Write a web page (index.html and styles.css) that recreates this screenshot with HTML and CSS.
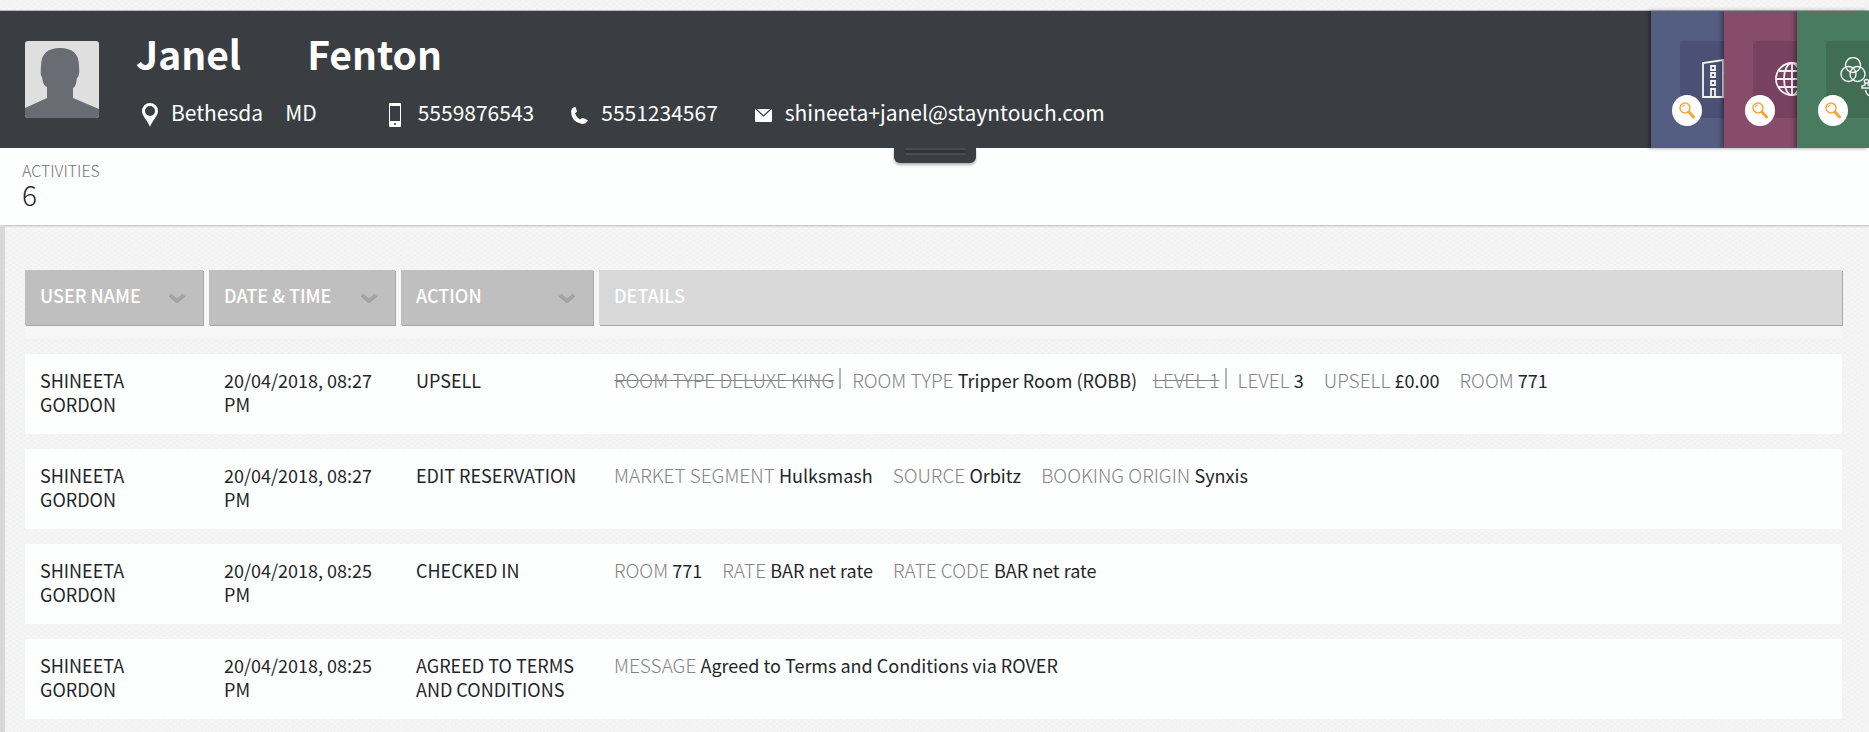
FILE: index.html
```
<!DOCTYPE html>
<html lang="en">
<head>
    <meta charset="utf-8">
    <title>Activity Log</title>
    <link rel="stylesheet" href="styles.css">
</head>
<body>
    <header class="guest">
        <svg class="avatar" viewBox="0 0 74 77" aria-hidden="true">
            <rect width="74" height="77" fill="#dfdfdf"/>
            <path d="M0 77V67L22 57V46Q18 45 17 36Q15 35 16 25Q16 7 35 7Q54 7 54 25Q55 35 52 37Q51 46 48 47V57L74 68V77Z" fill="#696c73"/>
        </svg>
        <div class="guest-info">
            <h1><span>Janel</span><span>Fenton</span></h1>
            <ul class="contact">
                <li class="place">
                    <svg width="16" height="24" viewBox="0 0 16 24"><path fill-rule="evenodd" d="M8 0A8 8 0 0 0 0 8C0 13 6 18 8 24C10 18 16 13 16 8A8 8 0 0 0 8 0ZM8 3A5 5 0 1 1 8 13A5 5 0 0 1 8 3Z" fill="#fff"/></svg>
                    <span>Bethesda</span><span class="state">MD</span>
                </li>
                <li class="mobile">
                    <svg width="12" height="24" viewBox="0 0 12 24"><path fill-rule="evenodd" d="M1 0H11Q12 0 12 1V23Q12 24 11 24H1Q0 24 0 23V1Q0 0 1 0ZM1 3V18H11V3ZM6 20A1 1 0 0 0 6 22A1 1 0 0 0 6 20Z" fill="#fff"/></svg>
                    <span>5559876543</span>
                </li>
                <li class="phone">
                    <svg width="17" height="17" viewBox="0 0 17 17"><path d="M3 0L4.500 0L6 4.500L4 6.500Q5.500 10.500 9 12.500L11 11Q14 11 17 13.500Q15 17 11 17Q0 15 0 4Q1 1 3 0Z" fill="#fff"/></svg>
                    <span>5551234567</span>
                </li>
                <li class="mail">
                    <svg width="17" height="13" viewBox="0 0 17 13"><rect width="17" height="13" rx="1" fill="#fff"/><path d="M1 0L8.500 7L16 0" fill="none" stroke="#3b3d42" stroke-width="1.200"/></svg>
                    <span>shineeta+janel@stayntouch.com</span>
                </li>
            </ul>
        </div>
        <nav class="cards">
            <button class="card company" aria-label="Company">
                <span class="tile">
                    <svg width="40" height="40" viewBox="0 0 40 40"><path d="M1 38V4L21 1V38ZM21 14H38V38H21M9 7H13V11H9ZM9 14H13V18H9ZM9 22H13V26H9ZM9 38V30H13V38"/></svg>
                </span>
                <span class="lens"><svg width="16" height="17" viewBox="0 0 16 17"><circle cx="6" cy="6" r="5"/><path d="M10 10L14.500 15" class="grip"/><path d="M3 5Q4 3 6 3" class="glint"/></svg></span>
            </button>
            <button class="card travel" aria-label="Travel agent">
                <span class="tile">
                    <svg width="40" height="40" viewBox="0 0 40 40"><circle cx="17" cy="20" r="16"/><ellipse cx="17" cy="20" rx="8" ry="16"/><path d="M17 4V36M1 20H33M4 12H30M4 28H30"/></svg>
                </span>
                <span class="lens"><svg width="16" height="17" viewBox="0 0 16 17"><circle cx="6" cy="6" r="5"/><path d="M10 10L14.500 15" class="grip"/><path d="M3 5Q4 3 6 3" class="glint"/></svg></span>
            </button>
            <button class="card group" aria-label="Group">
                <span class="tile">
                    <svg class="rings" width="42" height="42" viewBox="0 0 42 42"><circle cx="13" cy="8" r="7.500"/><circle cx="8.500" cy="17" r="7.500"/><circle cx="17.500" cy="17" r="7.500"/><path d="M22 31V29L25 28V26H28V28L31 29V31ZM25 26Q23 23 26.500 22.500Q30 23 28 26M25.500 33Q26 38 32 40"/></svg>
                </span>
                <span class="lens"><svg width="16" height="17" viewBox="0 0 16 17"><circle cx="6" cy="6" r="5"/><path d="M10 10L14.500 15" class="grip"/><path d="M3 5Q4 3 6 3" class="glint"/></svg></span>
            </button>
        </nav>
        <button class="handle" aria-label="Expand guest details"></button>
    </header>

    <section class="summary">
        <span class="summary-label">ACTIVITIES</span>
        <span class="summary-count">6</span>
    </section>

    <main class="log">
        <table>
            <colgroup>
                <col class="col-user">
                <col class="col-date">
                <col class="col-action">
                <col>
            </colgroup>
            <thead>
                <tr>
                    <th><button class="head">USER NAME <svg width="18" height="10" viewBox="0 0 18 10"><path d="M2 2L9 8L16 2"/></svg></button></th>
                    <th><button class="head">DATE &amp; TIME <svg width="18" height="10" viewBox="0 0 18 10"><path d="M2 2L9 8L16 2"/></svg></button></th>
                    <th><button class="head">ACTION <svg width="18" height="10" viewBox="0 0 18 10"><path d="M2 2L9 8L16 2"/></svg></button></th>
                    <th><div class="head plain">DETAILS</div></th>
                </tr>
            </thead>
            <tbody>
                <tr>
                    <td>SHINEETA GORDON</td>
                    <td>20/04/2018, 08:27 PM</td>
                    <td>UPSELL</td>
                    <td>
                        <div class="details">
                            <span class="was"><del>ROOM TYPE DELUXE KING</del></span>
                            <span>ROOM TYPE <b>Tripper Room (ROBB)</b></span>
                            <span class="was"><del>LEVEL 1</del></span>
                            <span>LEVEL <b>3</b></span>
                            <span>UPSELL <b>£0.00</b></span>
                            <span>ROOM <b>771</b></span>
                        </div>
                    </td>
                </tr>
                <tr>
                    <td>SHINEETA GORDON</td>
                    <td>20/04/2018, 08:27 PM</td>
                    <td>EDIT RESERVATION</td>
                    <td>
                        <div class="details">
                            <span>MARKET SEGMENT <b>Hulksmash</b></span>
                            <span>SOURCE <b>Orbitz</b></span>
                            <span>BOOKING ORIGIN <b>Synxis</b></span>
                        </div>
                    </td>
                </tr>
                <tr>
                    <td>SHINEETA GORDON</td>
                    <td>20/04/2018, 08:25 PM</td>
                    <td>CHECKED IN</td>
                    <td>
                        <div class="details">
                            <span>ROOM <b>771</b></span>
                            <span>RATE <b>BAR net rate</b></span>
                            <span>RATE CODE <b>BAR net rate</b></span>
                        </div>
                    </td>
                </tr>
                <tr>
                    <td>SHINEETA GORDON</td>
                    <td>20/04/2018, 08:25 PM</td>
                    <td>AGREED TO TERMS AND CONDITIONS</td>
                    <td>
                        <div class="details">
                            <span>MESSAGE <b>Agreed to Terms and Conditions via ROVER</b></span>
                        </div>
                    </td>
                </tr>
            </tbody>
        </table>
    </main>
</body>
</html>
```
FILE: styles.css
```
* {
    box-sizing: border-box;
}

body {
    margin: 0;
    padding-top: 11px;
    min-height: 100vh;
    display: flex;
    flex-direction: column;
    font-family: "Noto Sans CJK SC", "Open Sans", sans-serif;
    font-size: 18px;
    line-height: 24px;
    color: #25262b;
    background-color: #f5f5f5;
    background-image:
        repeating-linear-gradient(35deg, rgba(0, 0, 0, 0.01) 0 1px, transparent 1px 4px),
        repeating-linear-gradient(-35deg, rgba(0, 0, 0, 0.01) 0 1px, transparent 1px 4px);
}

button {
    font: inherit;
    color: inherit;
    border: none;
    padding: 0;
    text-align: left;
    cursor: pointer;
}

/* guest header */
.guest {
    position: relative;
    display: flex;
    background: #3a3d42;
    color: #fff;
    box-shadow: 0 -1px 0 #b5b6b8;
}

.avatar {
    width: 74px;
    height: 77px;
    margin: 30px 37px 0 25px;
    border-radius: 3px;
}

.guest-info {
    flex: 1;
    padding: 12px 0 20px;
}

h1 {
    display: flex;
    gap: 66px;
    margin: 0 0 13px;
    font-size: 39px;
    line-height: 60px;
    font-weight: 700;
}

.contact {
    display: flex;
    margin: 0;
    padding: 0 0 0 6px;
    list-style: none;
    font-size: 21px;
    line-height: 32px;
}

.contact li {
    display: flex;
    align-items: center;
}

.contact svg {
    margin-top: 6px;
}

.place {
    gap: 13px;
    margin-right: 72px;
}

.state {
    margin-left: 9px;
}

.mobile {
    gap: 17px;
    margin-right: 37px;
}

.phone,
.mail {
    gap: 13px;
}

.phone {
    margin-right: 37px;
}

/* side cards */
.cards {
    display: flex;
}

.card {
    position: relative;
    width: 73px;
    padding: 30px 0 30px 29px;
    overflow: hidden;
    display: flex;
    box-shadow: -2px 0 4px rgba(0, 0, 0, 0.4);
}

.card:last-child {
    width: 72px;
}

.company {
    background: #545d82;
}

.travel {
    background: #864c69;
}

.group {
    background: #497b60;
}

.tile {
    flex: none;
    width: 77px;
    height: 77px;
    padding: 18px 0 0 22px;
    border-radius: 3px;
    background: rgba(20, 10, 40, 0.14);
}

.group .tile {
    padding: 16px 0 0 14px;
    background: rgba(20, 30, 20, 0.14);
}

.tile svg {
    display: block;
    fill: none;
    stroke: #f2f2f2;
    stroke-width: 1.8;
}

.tile .rings {
    stroke-width: 1.4;
}

.lens {
    position: absolute;
    left: 21px;
    top: 84px;
    width: 30px;
    height: 31px;
    border-radius: 50%;
    background: #fff;
    display: flex;
    align-items: center;
    justify-content: center;
}

.lens svg {
    fill: none;
    stroke: #f9a436;
    stroke-width: 1.5;
}

.lens .grip {
    stroke-width: 3;
    stroke-linecap: round;
}

.lens .glint {
    stroke-width: 1;
}

/* drawer handle hangs below the header */
.handle {
    position: absolute;
    top: 100%;
    left: 50%;
    width: 82px;
    height: 15px;
    transform: translateX(-50%);
    border-radius: 0 0 6px 6px;
    background: linear-gradient(#4a4c51 0 2px, #323439 2px 5px, #4a4c51 5px 7px, transparent 7px) center top / 60px 7px no-repeat #3a3d42;
    box-shadow: 0 2px 3px rgba(0, 0, 0, 0.3);
}

/* summary bar */
.summary {
    display: flex;
    flex-direction: column;
    padding: 12px 22px 17px;
    background: #fdfefe;
    box-shadow: 0 1px 2px rgba(0, 0, 0, 0.25);
}

.summary-label {
    font-size: 16px;
    line-height: 20px;
    font-weight: 300;
    color: #777;
}

.summary-count {
    font-size: 28px;
    line-height: 28px;
    font-weight: 300;
}

/* activity log */
.log {
    flex: 1;
    padding: 45px 27px 13px 20px;
    border-left: 5px solid #d8d8d8;
}

table {
    width: 100%;
    table-layout: fixed;
    border-spacing: 0;
}

.col-user {
    width: 184px;
}

.col-date {
    width: 192px;
}

.col-action {
    width: 198px;
}

th {
    padding: 0 6px 14px 0;
    background: #f6f6f6;
}

th:last-child {
    padding-right: 0;
}

.head {
    display: flex;
    align-items: center;
    justify-content: space-between;
    width: 100%;
    height: 55px;
    padding: 0 17px 5px 15px;
    font-weight: 500;
    color: #fff;
    background: #bfbfbf;
    box-shadow: 1px 1px 0 #a6a6a6;
}

.head.plain {
    background: #d8d8d8;
}

.head svg {
    margin-top: 6px;
    fill: none;
    stroke: #a3a3a3;
    stroke-width: 4;
}

td {
    padding: 14px 15px 18px;
    vertical-align: top;
    border-top: 15px solid transparent;
    background: #fdfefe;
    background-clip: padding-box;
}

.details {
    display: flex;
    flex-wrap: wrap;
    gap: 0 20px;
    font-size: 19px;
    font-weight: 300;
    color: #858585;
}

.details b {
    font-size: 18px;
    font-weight: 400;
    color: #25262b;
}

.was {
    display: flex;
    margin-right: -9px;
}

span + .was {
    margin-left: -4px;
}

.was::after {
    content: "";
    width: 2px;
    height: 21px;
    margin-left: 5px;
    background: #b5b5b5;
}
```
